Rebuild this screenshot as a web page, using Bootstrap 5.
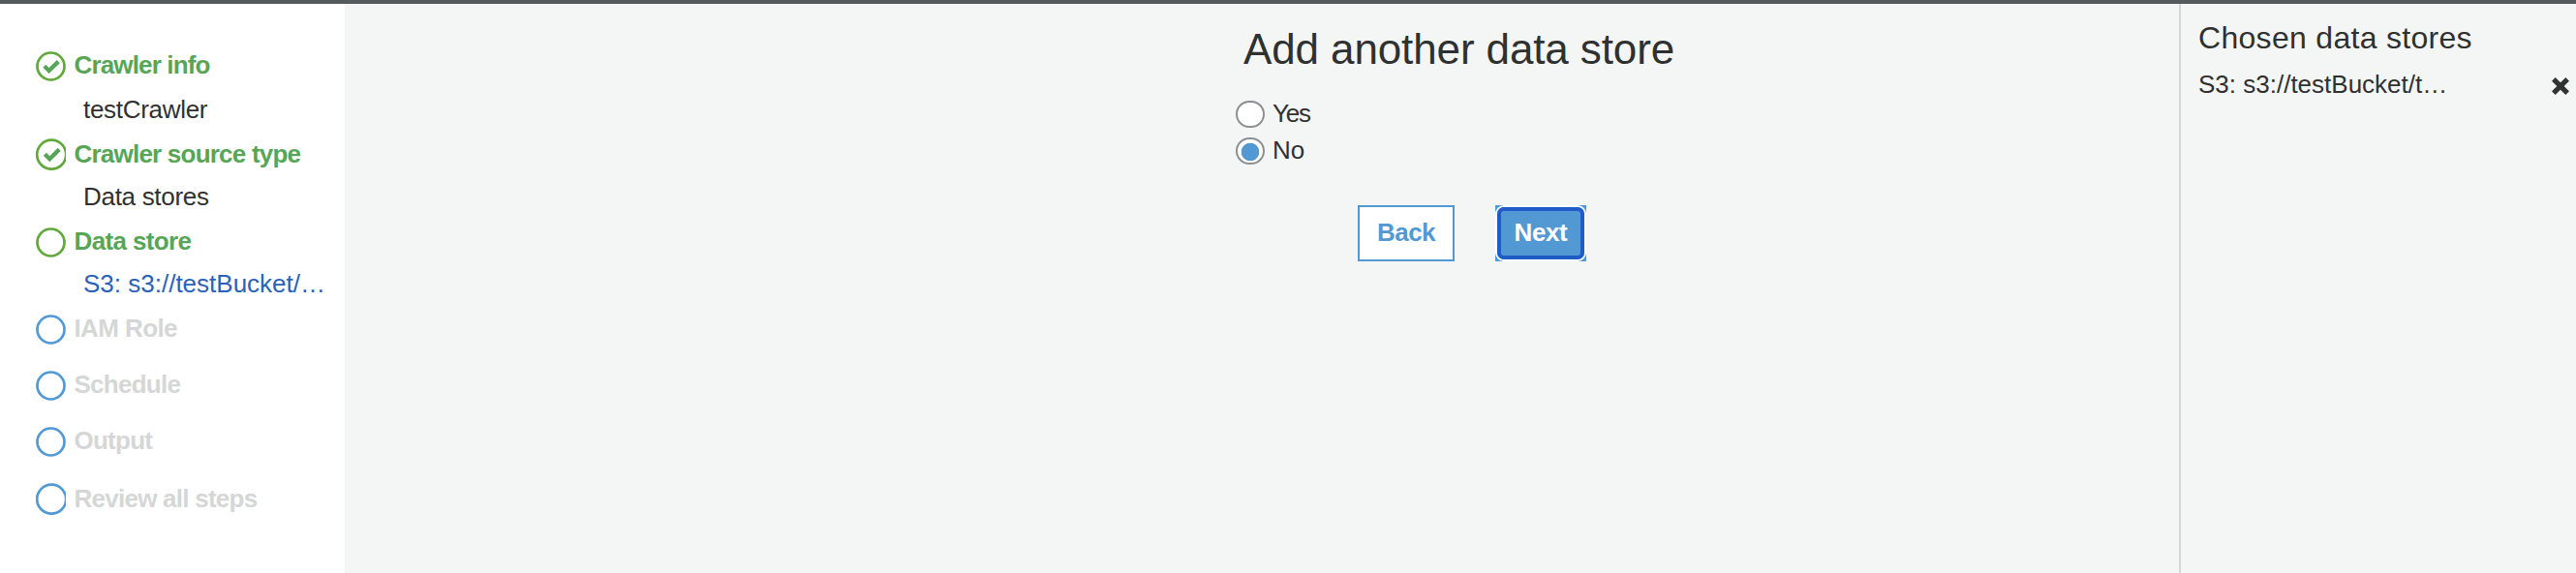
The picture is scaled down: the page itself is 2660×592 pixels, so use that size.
<!DOCTYPE html>
<html lang="en">
<head>
<meta charset="utf-8">
<meta name="viewport" content="width=device-width, initial-scale=1">
<title>Add crawler</title>
<link href="https://cdn.jsdelivr.net/npm/bootstrap@5.3.0/dist/css/bootstrap.min.css" rel="stylesheet">
<style>
body{font-family:"Liberation Sans",Arial,sans-serif;font-size:26px;line-height:30px;color:#2f3130;background:#f4f6f6;height:592px;overflow:hidden}
.wizard{height:592px;border-top:4px solid #545b5d}
.steps{width:356px;padding:48px 0 0 36.5px}
.step-row{height:30px;font-weight:700;letter-spacing:-.75px;color:#d5d7d6;gap:9px;white-space:nowrap}
.step-row svg{width:31px;height:32px;flex:none;margin-top:1px;fill:none;stroke:#529ad5;stroke-width:2.7}
.step-row.done,.step-row.active{color:#57a657}
.step-row.done svg,.step-row.active svg{stroke:#62a93b}
.step-row svg.shifted{margin-top:-1px;height:33px}
.step-row svg .tick{stroke:#57a657;stroke-width:4.4}
.step-value{margin-left:49.5px;height:30px;letter-spacing:-.3px;white-space:nowrap}
.step-value a{color:#2962b8;letter-spacing:0}
.g14{margin-bottom:14px}.g16{margin-bottom:16px}.g28{margin-bottom:28px}.g30{margin-bottom:30px}
.content-pane{padding:22px 0 0 920px}
.page-title{font-size:44px;line-height:50px;font-weight:400;margin:0 0 26px 8px;letter-spacing:-.12px}
.choice{height:30px;margin-bottom:8px;gap:8px;padding-top:2px}
.choice .form-check-input{width:30px;height:28px;margin:0;border:2px solid #8b9091;border-radius:14px;background:#fff;box-shadow:none;flex:none}
.choice .form-check-input:checked{border-color:#8b9091;background:radial-gradient(circle at 13px 13px,#5299d3 8.9px,#fff 9.6px)}
.choice label{height:30px;margin-top:-2px}
.actions{margin:42px 0 0 126px;gap:42px}
.wiz-btn{font-size:26px;line-height:30px;font-weight:700;letter-spacing:-.6px;height:58px;border-radius:0;padding:0}
.wiz-back{width:100px;border:2px solid #5299d3;background:#fff;color:#5299d3;padding-bottom:2px}
.wiz-next{width:94px;border:0;background:#5299d3;color:#fff;padding:2px}
.wiz-next span{display:block;height:54px;border:4px solid #205cc8;border-radius:7px;box-shadow:0 0 0 2px #fff;padding-top:7px;letter-spacing:-.4px}
.chosen{width:410px;border-left:2px solid #d3d7d7;padding:16px 6px 0 18px}
.chosen h2{font-size:32px;line-height:38px;font-weight:400;margin:0 0 14px;letter-spacing:.3px}
.remove{width:20px;height:20px;padding:0;border:0;background:none;display:block;margin-top:7px}
.remove svg{display:block}
</style>
</head>
<body>
<div class="wizard d-flex">
  <nav class="steps bg-white flex-shrink-0">
    <div class="step-row done d-flex g16" style="letter-spacing:-.85px"><svg viewBox="0 0 31 32"><circle cx="15.5" cy="15.5" r="14"/><path class="tick" d="M8.8 15.2 13.6 20 23.3 10.6"/></svg>Crawler info</div>
    <div class="step-value g16">testCrawler</div>
    <div class="step-row done d-flex g14" style="letter-spacing:-.78px"><svg class="shifted" viewBox="0 0 31 33"><circle cx="16.2" cy="16.7" r="15"/><path class="tick" d="M9.3 16.2 14.3 21.2 24.2 11.4"/></svg>Crawler source type</div>
    <div class="step-value g16">Data stores</div>
    <div class="step-row active d-flex g14" style="letter-spacing:-.62px"><svg viewBox="0 0 31 32"><circle cx="15.5" cy="15.5" r="14"/></svg>Data store</div>
    <div class="step-value g16"><a class="text-decoration-none" href="#">S3: s3://testBucket/…</a></div>
    <div class="step-row d-flex g28" style="letter-spacing:-.6px"><svg viewBox="0 0 31 32"><circle cx="15.5" cy="15.5" r="14"/></svg>IAM Role</div>
    <div class="step-row d-flex g28"><svg viewBox="0 0 31 32"><circle cx="15.5" cy="15.5" r="14"/></svg>Schedule</div>
    <div class="step-row d-flex g30"><svg viewBox="0 0 31 32"><circle cx="15.5" cy="15.5" r="14"/></svg>Output</div>
    <div class="step-row d-flex"><svg class="shifted" viewBox="0 0 31 33"><circle cx="16.2" cy="16.7" r="15"/></svg>Review all steps</div>
  </nav>
  <main class="content-pane flex-grow-1">
    <h1 class="page-title">Add another data store</h1>
    <div class="choice d-flex"><input class="form-check-input" type="radio" name="more" id="yes"><label for="yes" style="letter-spacing:-1.2px">Yes</label></div>
    <div class="choice d-flex"><input class="form-check-input" type="radio" name="more" id="no" checked><label for="no">No</label></div>
    <div class="actions d-flex">
      <button type="button" class="btn wiz-btn wiz-back">Back</button>
      <button type="button" class="btn wiz-btn wiz-next"><span>Next</span></button>
    </div>
  </main>
  <aside class="chosen flex-shrink-0">
    <h2>Chosen data stores</h2>
    <div class="d-flex justify-content-between">
      <span>S3: s3://testBucket/t…</span>
      <button type="button" class="remove" aria-label="Remove"><svg width="20" height="20" viewBox="0 0 20 20"><path d="M3.8 3.8 16.2 16.2M16.2 3.8 3.8 16.2" fill="none" stroke="#2f3332" stroke-width="6" stroke-linecap="square" stroke-linejoin="round" transform="translate(1.4 1.4) scale(.86)"/></svg></button>
    </div>
  </aside>
</div>
<script src="https://cdn.jsdelivr.net/npm/bootstrap@5.3.0/dist/js/bootstrap.bundle.min.js"></script>
</body>
</html>
